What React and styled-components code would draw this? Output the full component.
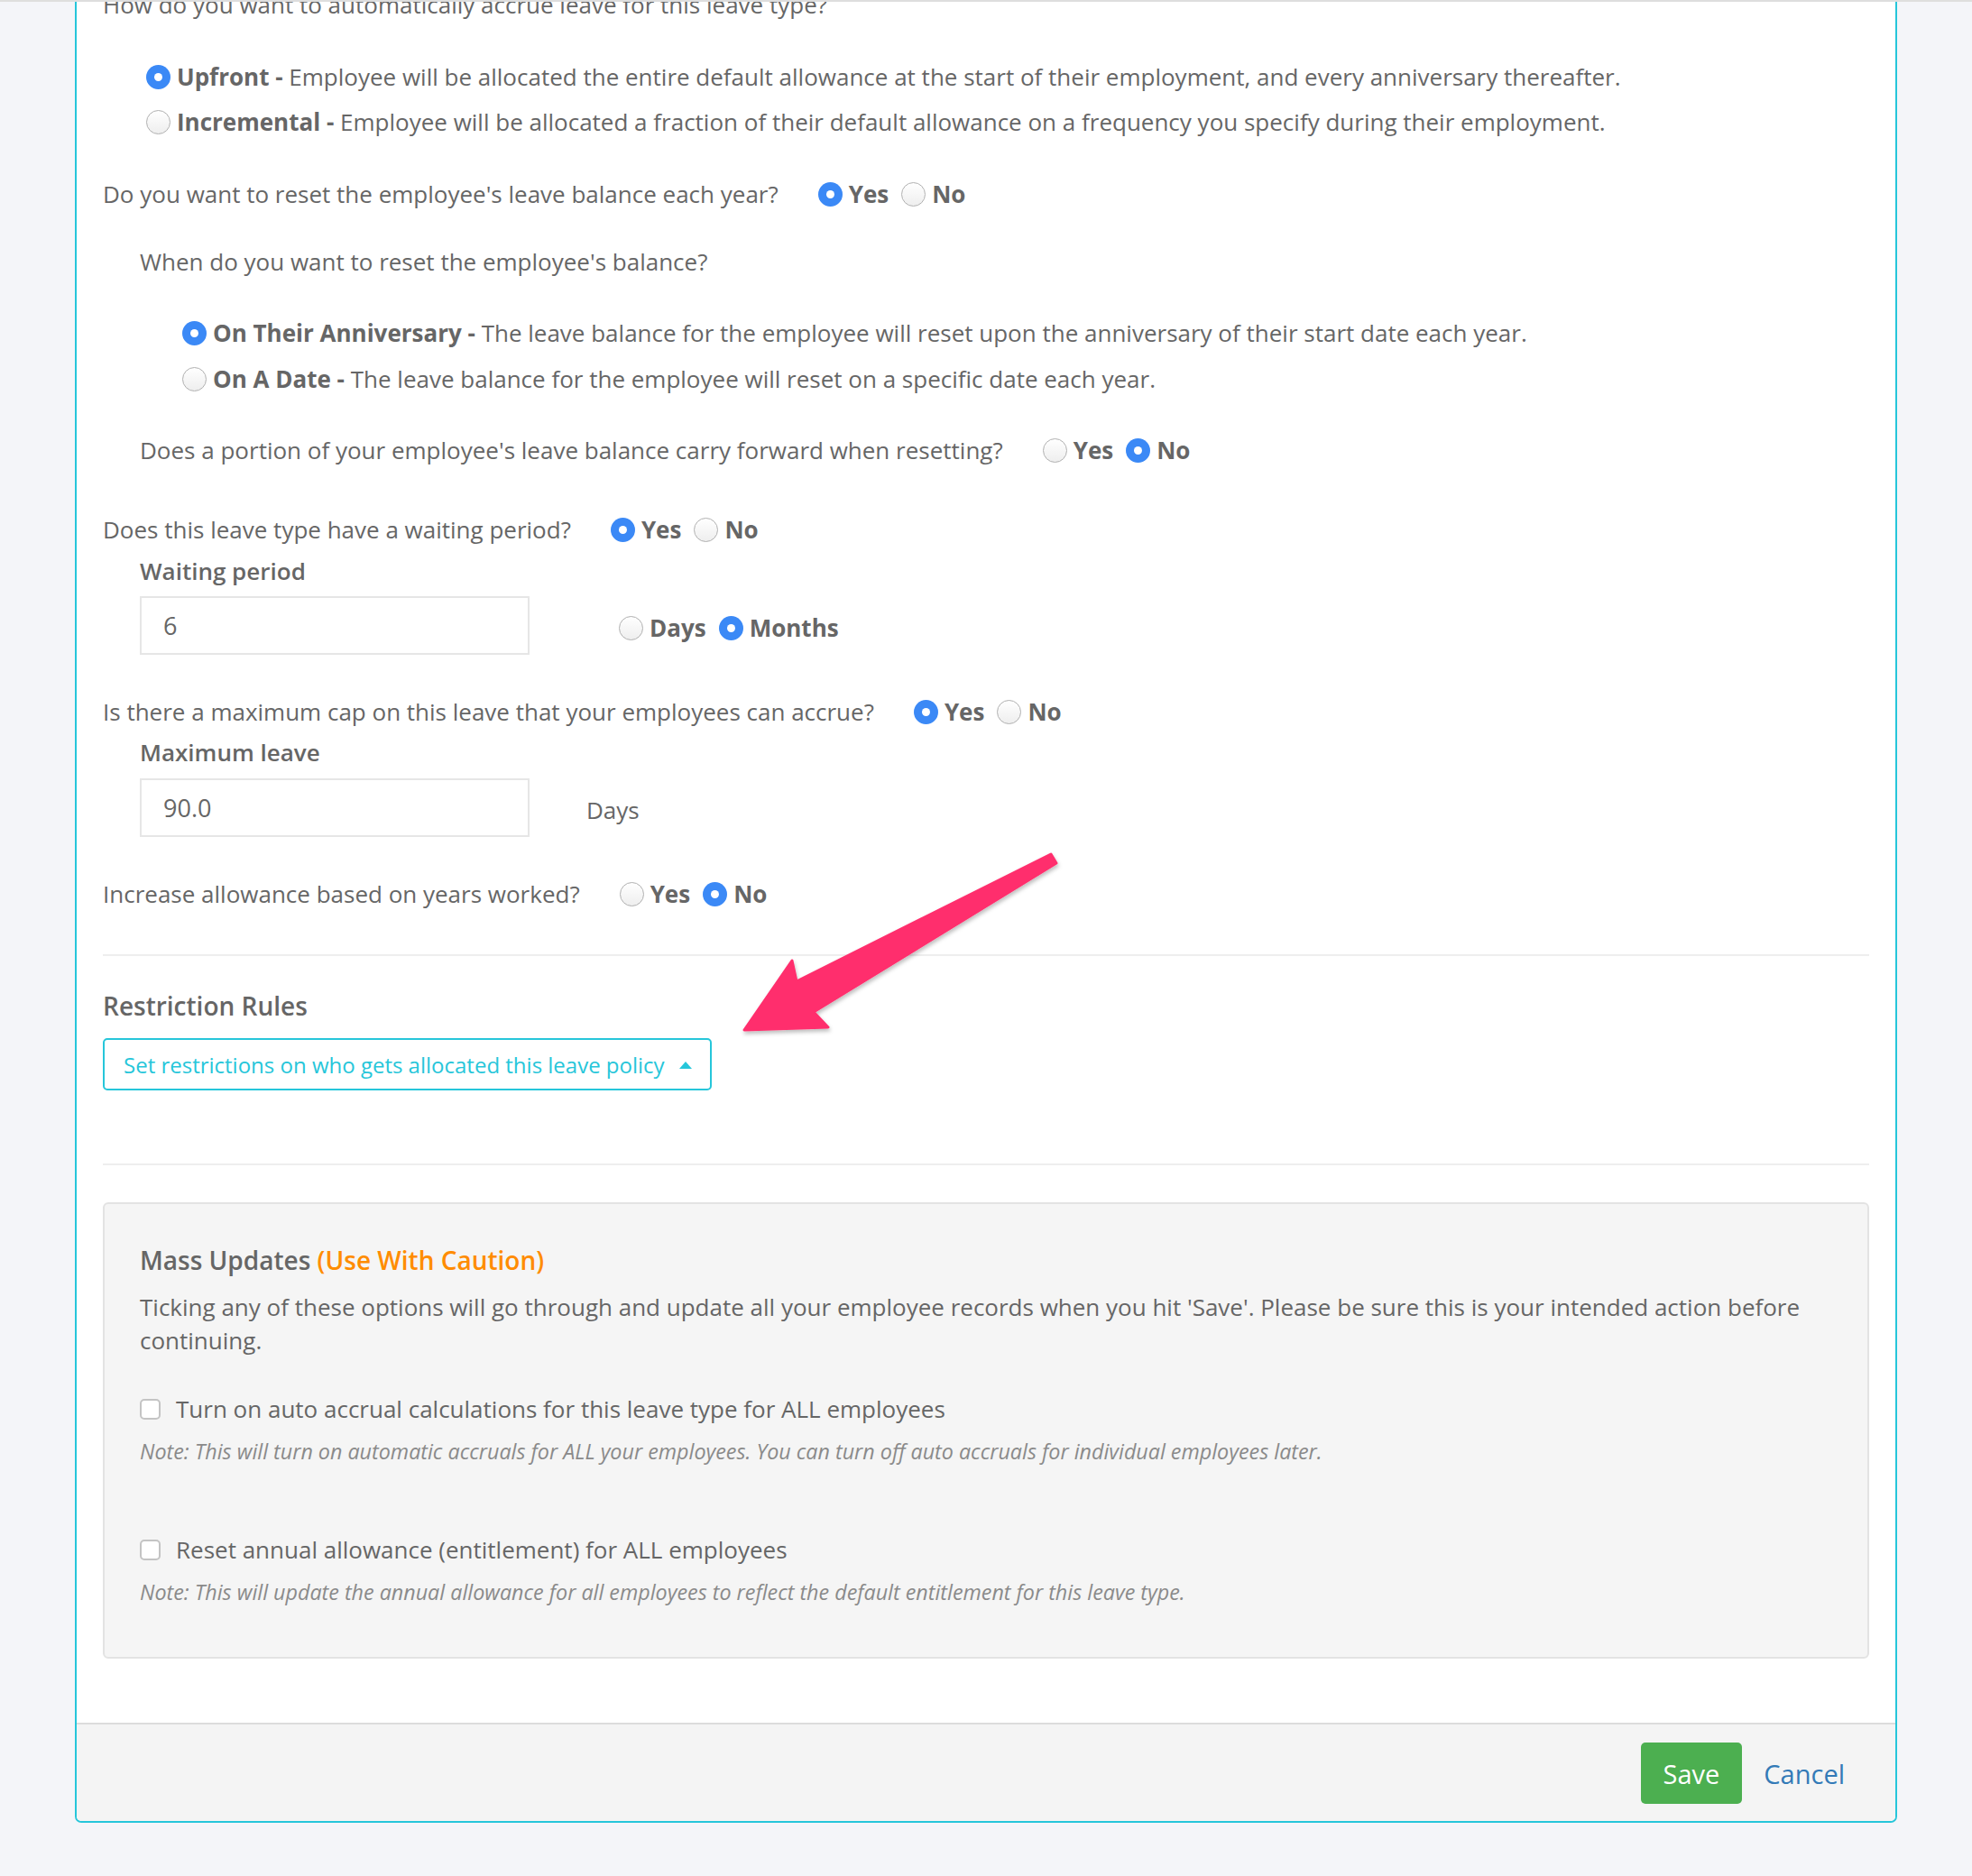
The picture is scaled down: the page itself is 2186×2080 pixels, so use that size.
import React from 'react';
import styled, { createGlobalStyle } from 'styled-components';

const GlobalStyle = createGlobalStyle`
  body {
    margin: 0;
    background: #f4f5f9;
    font-family: 'Open Sans', 'Noto Sans', sans-serif;
    color: #666;
  }
`

const Page = styled.div`
  position: relative;
  width: 2186px;
  min-height: 2080px;
  overflow: hidden;
`

const TopLine = styled.div`
  height: 2px;
  background: #dedede;
`

const Panel = styled.div`
  margin-left: 83px;
  width: 2020px;
  box-sizing: border-box;
  background: #fff;
  border: 2px solid #26c6da;
  border-top: none;
  border-radius: 0 0 7px 7px;
  overflow: hidden;
`

const Body = styled.div`
  padding: 0 29px 71px 29px;
`

const Row = styled.div`
  display: flex;
  align-items: center;
  min-height: 37px;
  margin-top: ${p => p.$top || 0}px;
  padding-left: ${p => p.$indent || 0}px;
  font-size: 26px;
  line-height: 37px;
`

const Question = styled.span`
  color: #666;
`

const Group = styled.div`
  display: flex;
  align-items: center;
  margin-left: ${p => p.$ml || 44}px;
  margin-top: ${p => p.$shift || 0}px;
`

const Option = styled.label`
  display: flex;
  align-items: center;
  margin-right: 14px;
  white-space: nowrap;
`

const Dot = styled.span`
  flex: none;
  width: 27px;
  height: 27px;
  box-sizing: border-box;
  border-radius: 50%;
  margin-right: 7px;
  display: flex;
  align-items: center;
  justify-content: center;
  background: ${p => p.$on ? '#3b89f6' : 'linear-gradient(#ffffff, #eeeeee)'};
  border: ${p => p.$on ? 'none' : '1.5px solid #b0b0b0'};
  &::after {
    content: '';
    display: ${p => p.$on ? 'block' : 'none'};
    width: 9px;
    height: 9px;
    border-radius: 50%;
    background: #fff;
  }
`

const Strong = styled.b`
  font-weight: 700;
  color: #666;
`

const FieldLabel = styled.div`
  margin-top: ${p => p.$top || 0}px;
  padding-left: 41px;
  font-size: 26px;
  line-height: 37px;
  font-weight: 600;
  color: #666;
`

const Input = styled.input`
  width: 432px;
  height: 65px;
  box-sizing: border-box;
  border: 2px solid #e6e6e6;
  padding: 0 0 0 24px;
  font-family: inherit;
  font-size: 27px;
  color: #666;
  outline: none;
`

const Unit = styled.span`
  margin-left: ${p => p.$ml}px;
  margin-top: 6px;
`

const Rule = styled.hr`
  border: none;
  height: 2px;
  background: #eeeeee;
  margin: ${p => p.$top}px 0 0;
`

const Heading = styled.div`
  margin-top: ${p => p.$top || 0}px;
  font-size: 28px;
  line-height: 40px;
  font-weight: 600;
  color: #666;
`

const Caution = styled.span`
  color: #ff8c00;
`

const ToggleButton = styled.button`
  margin-top: 16px;
  height: 58px;
  box-sizing: border-box;
  display: inline-flex;
  align-items: center;
  gap: 16px;
  padding: 0 20px 0 21px;
  background: #fff;
  border: 2px solid #26c6da;
  border-radius: 5px;
  color: #26c6da;
  font-family: inherit;
  font-size: 24px;
  cursor: pointer;
`

const Caret = styled.span`
  width: 0;
  height: 0;
  border-left: 7px solid transparent;
  border-right: 7px solid transparent;
  border-bottom: 8px solid #26c6da;
  margin-top: 2px;
`

const MassBox = styled.div`
  margin-top: 41px;
  background: #f5f5f5;
  border: 2px solid #e3e3e3;
  border-radius: 6px;
  padding: 42px 41px 56px 39px;
`

const Paragraph = styled.p`
  margin: 14px 0 0;
  font-size: 26px;
  line-height: 37px;
`

const CheckRow = styled.label`
  display: flex;
  align-items: center;
  margin-top: ${p => p.$top}px;
  font-size: 26px;
  line-height: 37px;
`

const Box = styled.span`
  flex: none;
  width: 23px;
  height: 23px;
  box-sizing: border-box;
  border: 2px solid #c4c4c4;
  border-radius: 5px;
  background: #fff;
  margin-right: 17px;
`

const Note = styled.div`
  margin-top: 13px;
  font-size: 23.3px;
  line-height: 31px;
  font-style: italic;
  color: #8a8a8a;
`

const Footer = styled.div`
  display: flex;
  justify-content: flex-end;
  align-items: center;
  gap: 24px;
  padding: 20px 56px 19px 0;
  background: #f4f4f4;
  border-top: 2px solid #dcdcdc;
`

const SaveButton = styled.button`
  height: 68px;
  padding: 0 25px;
  background: #4caf50;
  border: none;
  border-radius: 5px;
  color: #fff;
  font-family: inherit;
  font-size: 29px;
`

const CancelLink = styled.a`
  color: #337ab7;
  font-size: 29px;
  text-decoration: none;
`

const ArrowLayer = styled.svg`
  position: absolute;
  left: 0;
  top: 0;
  pointer-events: none;
`

function Radio({ on, children }) {
  return (
    <Option>
      <Dot $on={on} />
      <span>{children}</span>
    </Option>
  );
}

function YesNo({ yes, ml }) {
  return (
    <Group $ml={ml}>
      <Radio on={yes}><Strong>Yes</Strong></Radio>
      <Radio on={!yes}><Strong>No</Strong></Radio>
    </Group>
  );
}

function App() {
  return (
    <Page>
      <GlobalStyle />
      <TopLine />
      <Panel>
        <Body>
          <Row $top={-15}><Question>How do you want to automatically accrue leave for this leave type?</Question></Row>
          <Row $top={43} $indent={48}>
            <Radio on><Strong>Upfront -</Strong> Employee will be allocated the entire default allowance at the start of their employment, and every anniversary thereafter.</Radio>
          </Row>
          <Row $top={13} $indent={48}>
            <Radio><Strong>Incremental -</Strong> Employee will be allocated a fraction of their default allowance on a frequency you specify during their employment.</Radio>
          </Row>

          <Row $top={43}>
            <Question>Do you want to reset the employee's leave balance each year?</Question>
            <YesNo yes />
          </Row>
          <Row $top={38} $indent={41}><Question>When do you want to reset the employee's balance?</Question></Row>
          <Row $top={42} $indent={88}>
            <Radio on><Strong>On Their Anniversary -</Strong> The leave balance for the employee will reset upon the anniversary of their start date each year.</Radio>
          </Row>
          <Row $top={14} $indent={88}>
            <Radio><Strong>On A Date -</Strong> The leave balance for the employee will reset on a specific date each year.</Radio>
          </Row>
          <Row $top={42} $indent={41}>
            <Question>Does a portion of your employee's leave balance carry forward when resetting?</Question>
            <YesNo yes={false} />
          </Row>

          <Row $top={51}>
            <Question>Does this leave type have a waiting period?</Question>
            <YesNo yes />
          </Row>
          <FieldLabel $top={9}>Waiting period</FieldLabel>
          <Row $top={9} $indent={41}>
            <Input readOnly value="6" />
            <Group $ml={99} $shift={5}>
              <Radio><Strong>Days</Strong></Radio>
              <Radio on><Strong>Months</Strong></Radio>
            </Group>
          </Row>

          <Row $top={45}>
            <Question>Is there a maximum cap on this leave that your employees can accrue?</Question>
            <YesNo yes />
          </Row>
          <FieldLabel $top={8}>Maximum leave</FieldLabel>
          <Row $top={10} $indent={41}>
            <Input readOnly value="90.0" />
            <Unit $ml={63}>Days</Unit>
          </Row>

          <Row $top={45}>
            <Question>Increase allowance based on years worked?</Question>
            <YesNo yes={false} />
          </Row>

          <Rule $top={48} />
          <Heading $top={35}>Restriction Rules</Heading>
          <ToggleButton>
            Set restrictions on who gets allocated this leave policy
            <Caret />
          </ToggleButton>
          <Rule $top={81} />

          <MassBox>
            <Heading>Mass Updates <Caution>(Use With Caution)</Caution></Heading>
            <Paragraph>
              Ticking any of these options will go through and update all your employee records when you hit 'Save'. Please be sure this is your intended action before continuing.
            </Paragraph>
            <CheckRow $top={39}>
              <Box />
              Turn on auto accrual calculations for this leave type for ALL employees
            </CheckRow>
            <Note>Note: This will turn on automatic accruals for ALL your employees. You can turn off auto accruals for individual employees later.</Note>
            <CheckRow $top={75}>
              <Box />
              Reset annual allowance (entitlement) for ALL employees
            </CheckRow>
            <Note>Note: This will update the annual allowance for all employees to reflect the default entitlement for this leave type.</Note>
          </MassBox>
        </Body>
        <Footer>
          <SaveButton>Save</SaveButton>
          <CancelLink href="#">Cancel</CancelLink>
        </Footer>
      </Panel>

      <ArrowLayer width="2186" height="2080" viewBox="0 0 2186 2080">
        <defs>
          <filter id="arrowShadow" x="-10%" y="-10%" width="120%" height="120%">
            <feDropShadow dx="1" dy="3" stdDeviation="2" floodColor="#000" floodOpacity="0.25" />
          </filter>
        </defs>
        <polygon
          points="825,1142 878,1065 883,1088 1165,947 1171,957 902,1122 918,1139"
          fill="#ff2f6d"
          stroke="#ff2f6d"
          strokeWidth="3"
          strokeLinejoin="round"
          filter="url(#arrowShadow)"
        />
      </ArrowLayer>
    </Page>
  );
}

export default App;
